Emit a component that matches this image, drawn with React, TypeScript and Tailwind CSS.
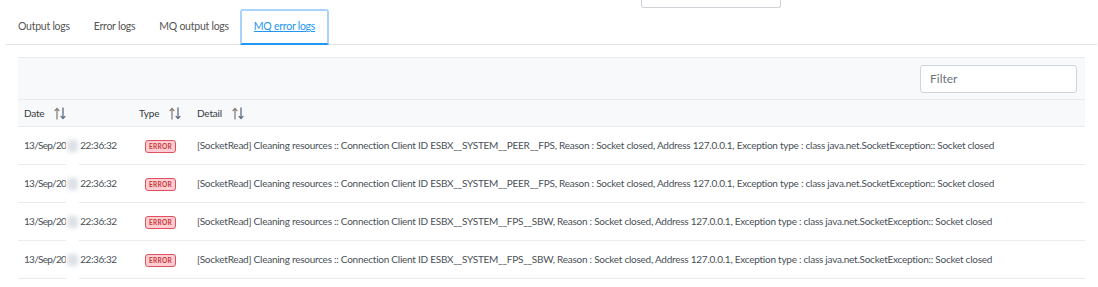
import React from "react";

const font = { fontFamily: 'Lato, "Noto Sans", Arial, sans-serif' };

function SortIcon() {
  return (
    <svg width="12" height="13" viewBox="0 0 12 13" className="ml-[10px] shrink-0" fill="none" strokeWidth="1.3" strokeLinecap="round" strokeLinejoin="round">
      <path d="M3 12V1.5M1 3.6L3 1.5L5 3.6" stroke="#8a7f78" />
      <path d="M9 1v10.5M7 9.4L9 11.5L11 9.4" stroke="#5d6f86" />
    </svg>
  );
}

const rows = [
  "ESBX__SYSTEM__PEER__FPS",
  "ESBX__SYSTEM__PEER__FPS",
  "ESBX__SYSTEM__FPS__SBW",
  "ESBX__SYSTEM__FPS__SBW",
];

export default function App() {
  return (
    <div className="w-[1098px] h-[287px] bg-white text-[#495057] overflow-hidden" style={font}>
      <div className="h-[8px] ml-[641px] w-[140px] border border-t-0 border-[#cfd3d7] rounded-b-[3px]" />
      <div className="mt-[2px] ml-[6px] mr-[1px] flex items-end border-b border-[#dee2e6] h-[35px] text-[10.5px] tracking-[-0.25px]">
        <div className="px-[12px] h-[34px] flex items-center text-[#555]">Output logs</div>
        <div className="px-[12px] h-[34px] flex items-center text-[#555]">Error logs</div>
        <div className="px-[12px] h-[34px] flex items-center text-[#555]">MQ output logs</div>
        <div className="ml-[-1px] h-[36px] mb-[-1px] px-[12px] flex items-center text-[#2196f3] underline border-2 border-[#a9d3fb] border-b-[#2196f3] rounded-t-[3px]">
          MQ error logs
        </div>
      </div>
      <div className="ml-[18px] w-[1067px] mt-[12px]">
        <div className="h-[43px] bg-[#f8f9fa] border-t border-b border-[#e9ecef] flex items-center justify-end pr-[8px]">
          <div className="w-[157px] h-[28px] bg-white border border-[#ced4da] rounded-[3px] flex items-center pl-[9px] text-[12px] text-[#6c757d]">
            Filter
          </div>
        </div>
        <div className="h-[27px] bg-[#f8f9fa] border-b border-[#e9ecef] flex items-center pl-[6px] text-[10px] tracking-[-0.2px] text-[#343a40]">
          <div className="w-[115px] flex items-center">Date<SortIcon /></div>
          <div className="w-[58px] flex items-center">Type<SortIcon /></div>
          <div className="flex items-center">Detail<SortIcon /></div>
        </div>
        {rows.map((id, i) => (
          <div key={i} className="h-[38px] border-b border-[#e9ecef] flex items-center pl-[6px] text-[10px] text-[#495057]">
            <div className="w-[115px] whitespace-nowrap flex items-center tracking-[-0.4px]">
              <span className="tracking-[-0.7px]">13/Sep/20</span>
              <span className="relative inline-block w-[13px] h-[12px] shrink-0">
                <span className="absolute inset-x-0 top-[-13px] bottom-[-14px] bg-white flex items-center justify-center">
                  <span className="w-[11px] h-[12px] bg-[#dde1e6] rounded-[3px] blur-[2px]" />
                </span>
              </span>
              <span className="ml-[1px]">22:36:32</span>
            </div>
            <div className="w-[58px] pl-[6px]">
              <span className="inline-flex items-center justify-center w-[31px] h-[13px] bg-[#ffcdd2] border border-[#e0505f] rounded-[3px] text-[6.5px] font-bold tracking-[0.3px] text-[#c63737]">
                ERROR
              </span>
            </div>
            <div className="whitespace-nowrap tracking-[-0.25px]">
              [SocketRead] Cleaning resources :: Connection Client ID {id}, Reason : Socket closed, Address 127.0.0.1, Exception type : class java.net.SocketException:: Socket closed
            </div>
          </div>
        ))}
      </div>
    </div>
  );
}
